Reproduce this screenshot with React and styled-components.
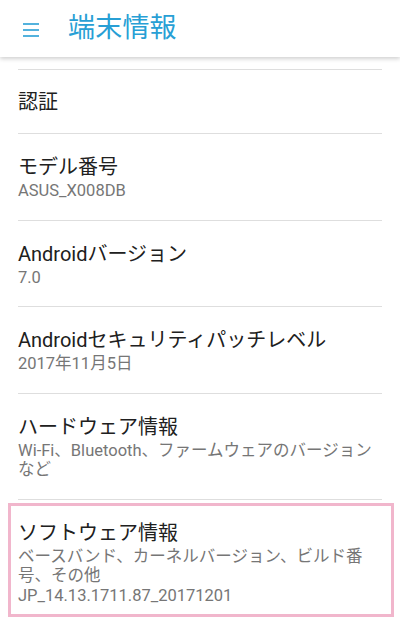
import React from "react";
import styled, { createGlobalStyle } from "styled-components";

const Global = createGlobalStyle`
  html, body { margin: 0; padding: 0; background: #fff; }
  body { font-family: "Roboto", "Noto Sans CJK JP", sans-serif; }
`;

const Screen = styled.div`
  width: 400px;
  height: 630px;
  overflow: hidden;
  background: #fff;
  display: flex;
  flex-direction: column;
`;

const Header = styled.header`
  height: 57px;
  flex: none;
  display: flex;
  align-items: center;
  background: #fff;
  box-shadow: 0 2px 4px rgba(0, 0, 0, 0.18);
  position: relative;
  z-index: 1;
`;

const MenuButton = styled.div`
  width: 16px;
  height: 14px;
  margin-left: 23px;
  margin-right: 29px;
  display: flex;
  margin-top: 2px;
`;

const Title = styled.h1`
  margin: 0;
  font-size: 27px;
  font-weight: 400;
  color: #289fd5;
  line-height: 1;
  letter-spacing: 0.2px;
`;

const List = styled.div`
  padding: 12px 18px 0;
  display: flex;
  flex-direction: column;
`;

const Row = styled.div`
  position: relative;
  border-top: 1px solid #dedede;
  min-height: ${(p) => (p.$single ? "63px" : "auto")};
  padding: ${(p) => (p.$single ? "0" : "19px 6px 19px 0")};
  display: flex;
  flex-direction: column;
  justify-content: center;
`;

const ItemTitle = styled.div`
  font-size: 20px;
  line-height: 28px;
  color: #202020;
`;

const ItemSub = styled.div`
  font-size: 16.5px;
  line-height: 19.5px;
  color: #767676;
`;

const Highlight = styled.div`
  position: absolute;
  top: 3px;
  left: -10px;
  width: 380px;
  height: 108px;
  border: 3px solid #f1b6cc;
  pointer-events: none;
`;

const items = [
  { title: "モデル番号", sub: ["ASUS_X008DB"] },
  { title: "Androidバージョン", sub: ["7.0"] },
  { title: "Androidセキュリティパッチレベル", sub: ["2017年11月5日"] },
  { title: "ハードウェア情報", sub: ["Wi-Fi、Bluetooth、ファームウェアのバージョンなど"] },
  {
    title: "ソフトウェア情報",
    sub: ["ベースバンド、カーネルバージョン、ビルド番号、その他", "JP_14.13.1711.87_20171201"],
    highlight: true,
  },
];

export default function App() {
  return (
    <>
      <Global />
      <Screen>
        <Header>
          <MenuButton>
            <svg width="16" height="14" viewBox="0 0 16 14">
              <g stroke="#289fd5" strokeWidth="1.6">
                <line x1="0" y1="1" x2="16" y2="1" />
                <line x1="0" y1="7" x2="16" y2="7" />
                <line x1="0" y1="13" x2="16" y2="13" />
              </g>
            </svg>
          </MenuButton>
          <Title>端末情報</Title>
        </Header>
        <List>
          <Row $single>
            <ItemTitle>認証</ItemTitle>
          </Row>
          {items.map((it) => (
            <Row key={it.title}>
              {it.highlight && <Highlight />}
              <ItemTitle>{it.title}</ItemTitle>
              {it.sub.map((s) => (
                <ItemSub key={s}>{s}</ItemSub>
              ))}
            </Row>
          ))}
        </List>
      </Screen>
    </>
  );
}
